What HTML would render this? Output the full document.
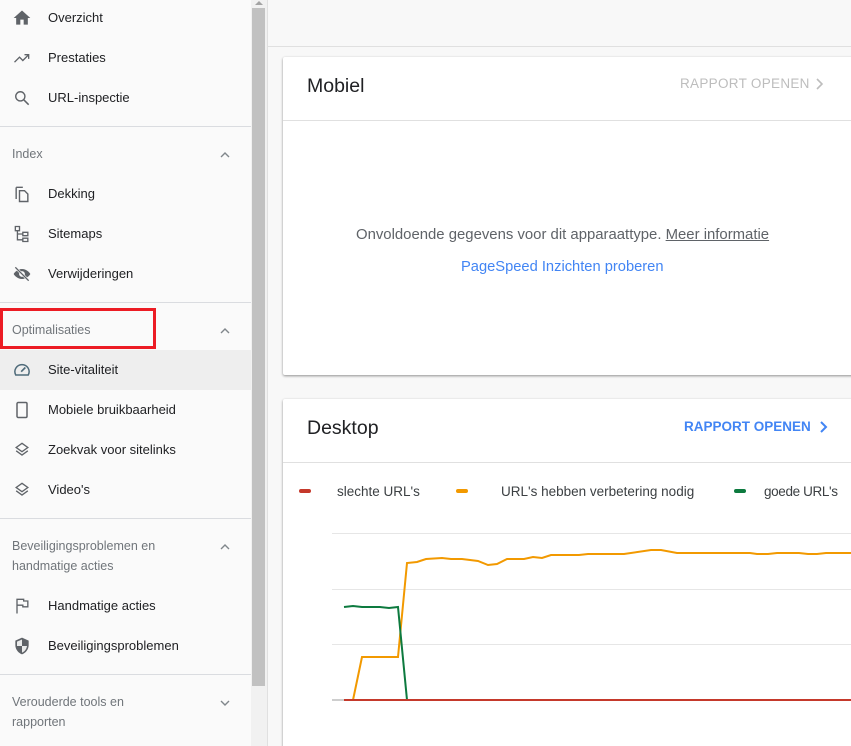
<!DOCTYPE html>
<html><head><meta charset="utf-8">
<style>
*{box-sizing:border-box;margin:0;padding:0}
html,body{width:851px;height:746px;overflow:hidden}
body{background:#f8f8f8;font-family:"Liberation Sans",Arial,sans-serif;position:relative}
#side{position:absolute;left:0;top:0;width:251px;height:746px;background:#fafafa}
.it{position:absolute;left:0;width:251px;height:40px;font-size:13px;color:#202124;line-height:40px;padding-left:48px}
.it svg{position:absolute;left:12px;top:10px;width:20px;height:20px}
.hd{position:absolute;left:12px;font-size:12.5px;color:#70757a;line-height:20px}
.chev{position:absolute;left:218px;width:14px;height:14px}
.dv{position:absolute;left:0;width:251px;height:1px;background:#dadce0}
#sb{position:absolute;left:251px;top:0;width:16px;height:746px;background:#f1f1f1}
#thumb{position:absolute;left:252px;top:8px;width:13px;height:678px;background:#c1c1c1}
#main{position:absolute;left:267px;top:0;width:584px;height:746px;border-left:1px solid #e0e0e0}
.card{position:absolute;left:283px;width:600px;background:#fff;box-shadow:0 1px 2px rgba(0,0,0,.3),0 1px 3px rgba(0,0,0,.15);border-radius:2px}
.ct{position:absolute;left:24px;font-size:19.5px;color:#202124}
.ro{position:absolute;font-size:13.5px;letter-spacing:.3px}
</style></head><body>
<div id="side">
<div class="it" style="top:-2px"><svg viewBox="0 0 24 24"><path fill="#5f6368" d="M10 20v-6h4v6h5v-8h3L12 3 2 12h3v8z"/></svg>Overzicht</div>
<div class="it" style="top:38px"><svg viewBox="0 0 24 24"><path fill="none" stroke="#5f6368" stroke-width="1.6" d="M3 17l6-6 4 4 7-7M15 8h5v5"/></svg>Prestaties</div>
<div class="it" style="top:78px"><svg viewBox="0 0 24 24"><circle cx="10" cy="10" r="5.5" fill="none" stroke="#5f6368" stroke-width="1.7"/><path d="M14 14l6 6" stroke="#5f6368" stroke-width="1.8"/></svg>URL-inspectie</div>
<div class="dv" style="top:126px"></div>
<div class="hd" style="top:144px">Index</div>
<svg class="chev" style="top:148px" viewBox="0 0 14 14"><path d="M3 9l4-4 4 4" fill="none" stroke="#80868b" stroke-width="1.4"/></svg>
<div class="it" style="top:174px"><svg viewBox="0 0 24 24"><path fill="none" stroke="#5f6368" stroke-width="1.7" d="M5 4v14M5 4h8M9 8h6l4 4v9H9z"/></svg>Dekking</div>
<div class="it" style="top:214px"><svg viewBox="0 0 24 24"><path fill="none" stroke="#5f6368" stroke-width="1.6" d="M4 3h5v5H4zM13 10h6v4h-6zM13 17h6v4h-6zM6.5 8v11h6.5M6.5 12h6.5"/></svg>Sitemaps</div>
<div class="it" style="top:254px"><svg viewBox="0 0 24 24"><path fill="#5f6368" d="M12 6c-5 0-9 4-10 6 1 2 5 6 10 6s9-4 10-6c-1-2-5-6-10-6zm0 9.5a3.5 3.5 0 110-7 3.5 3.5 0 010 7z"/><path d="M4 4l16 16" stroke="#fafafa" stroke-width="3"/><path d="M4 4l16 16" stroke="#5f6368" stroke-width="1.6"/></svg>Verwijderingen</div>
<div class="dv" style="top:302px"></div>
<div class="hd" style="top:320px">Optimalisaties</div>
<svg class="chev" style="top:324px" viewBox="0 0 14 14"><path d="M3 9l4-4 4 4" fill="none" stroke="#80868b" stroke-width="1.4"/></svg>
<div style="position:absolute;left:0;top:308px;width:156px;height:41px;border:3px solid #ec1c24"></div>
<div class="it" style="top:350px;background:#eeeeee"><svg viewBox="0 0 24 24"><path fill="none" stroke="#4f6b7a" stroke-width="1.8" d="M4.5 18a8.5 8.5 0 1115 0z"/><path d="M11 14l5-5" stroke="#4f6b7a" stroke-width="2"/></svg>Site-vitaliteit</div>
<div class="it" style="top:390px"><svg viewBox="0 0 24 24"><rect x="6" y="3" width="12" height="18" rx="1.5" fill="none" stroke="#5f6368" stroke-width="1.8"/></svg>Mobiele bruikbaarheid</div>
<div class="it" style="top:430px"><svg viewBox="0 0 24 24"><path fill="none" stroke="#5f6368" stroke-width="1.6" d="M12 4l7 5-7 5-7-5zM5 13l7 5 7-5"/></svg>Zoekvak voor sitelinks</div>
<div class="it" style="top:470px"><svg viewBox="0 0 24 24"><path fill="none" stroke="#5f6368" stroke-width="1.6" d="M12 4l7 5-7 5-7-5zM5 13l7 5 7-5"/></svg>Video's</div>
<div class="dv" style="top:518px"></div>
<div class="hd" style="top:536px">Beveiligingsproblemen en<br>handmatige acties</div>
<svg class="chev" style="top:540px" viewBox="0 0 14 14"><path d="M3 9l4-4 4 4" fill="none" stroke="#80868b" stroke-width="1.4"/></svg>
<div class="it" style="top:586px"><svg viewBox="0 0 24 24"><path fill="none" stroke="#5f6368" stroke-width="1.6" d="M6 21V4h8v2h5v7h-6v-2H6"/></svg>Handmatige acties</div>
<div class="it" style="top:626px"><svg viewBox="0 0 24 24"><path fill="#5f6368" d="M12 2l8 3.5V11c0 5-3.5 9.5-8 11-4.5-1.5-8-6-8-11V5.5z"/><path fill="#fafafa" d="M12 4.2v7.8H6V6.8zM12 12h6c-.5 3.8-3 6.8-6 8z" opacity=".9"/></svg>Beveiligingsproblemen</div>
<div class="dv" style="top:674px"></div>
<div class="hd" style="top:692px">Verouderde tools en<br>rapporten</div>
<svg class="chev" style="top:696px" viewBox="0 0 14 14"><path d="M3 5l4 4 4-4" fill="none" stroke="#80868b" stroke-width="1.4"/></svg>
</div>
<div id="sb"></div><div id="thumb"></div>
<svg style="position:absolute;left:254px;top:0" width="10" height="6"><path d="M1 5l4-4 4 4z" fill="#a3a3a3"/></svg>
<div id="main"><div style="position:absolute;left:0;top:46px;width:584px;height:1px;background:#e0e0e0"></div></div>

<div class="card" style="top:57px;height:318px">
 <div class="ct" style="top:18px">Mobiel</div>
 <div class="ro" style="left:397px;top:19px;color:#bdbdbd">RAPPORT OPENEN</div>
 <svg style="position:absolute;left:531px;top:20px" width="10" height="14"><path d="M3 2l5 5-5 5" fill="none" stroke="#bdbdbd" stroke-width="1.6"/></svg>
 <div style="position:absolute;left:0;top:63px;width:600px;height:1px;background:#e0e0e0"></div>
 <div style="position:absolute;left:73px;top:170px;font-size:14.9px;color:#5f6368;white-space:nowrap">Onvoldoende gegevens voor dit apparaattype. <span style="text-decoration:underline">Meer informatie</span></div>
 <div style="position:absolute;left:178px;top:202px;font-size:14.7px;color:#4285f4;white-space:nowrap">PageSpeed Inzichten proberen</div>
</div>

<div class="card" style="top:399px;height:360px">
 <div class="ct" style="top:18px">Desktop</div>
 <div class="ro" style="left:401px;top:20px;color:#4285f4;font-weight:bold;letter-spacing:0">RAPPORT OPENEN</div>
 <svg style="position:absolute;left:535px;top:21px" width="10" height="14"><path d="M3 2l5 5-5 5" fill="none" stroke="#4285f4" stroke-width="2"/></svg>
 <div style="position:absolute;left:0;top:63px;width:600px;height:1px;background:#e0e0e0"></div>
</div>
<svg style="position:absolute;left:0;top:0" width="851" height="746">
 <rect x="299" y="489" width="12" height="4" rx="2" fill="#c5392b"/>
 <rect x="456" y="489" width="12" height="4" rx="2" fill="#f29900"/>
 <rect x="734" y="489" width="12" height="4" rx="2" fill="#0d7a3f"/>
 <g font-family="Liberation Sans, Arial, sans-serif" font-size="13.5" fill="#3c4043">
  <text x="337" y="496">slechte URL's</text>
  <text x="501" y="496">URL's hebben verbetering nodig</text>
  <text x="764" y="496" textLength="74">goede URL's</text>
 </g>
 <g stroke="#e6e6e6" stroke-width="1"><path d="M332 533.5H851M332 589.5H851M332 644.5H851"/></g>
 <path d="M332 700H851" stroke="#9e9e9e"/>
 <polyline fill="none" stroke="#f29900" stroke-width="2" points="353,700 362,657 398,657 407,563 417,562 426,559 442,558 451,559 462,559 478,561 488,565 497,564 507,559 524,559 533,557 542,558 551,555 579,555 588,554 624,554 651,550 661,550 677,553 750,553 757,554 768,554 777,553 799,553 808,554 817,554 826,553 851,553"/>
 <polyline fill="none" stroke="#0d7a3f" stroke-width="2" points="344,607 353,606 362,607 380,607 389,608 398,607 407,700"/>
 <path d="M344 700H851" stroke="#c5392b" stroke-width="2"/>
</svg>
</body></html>
